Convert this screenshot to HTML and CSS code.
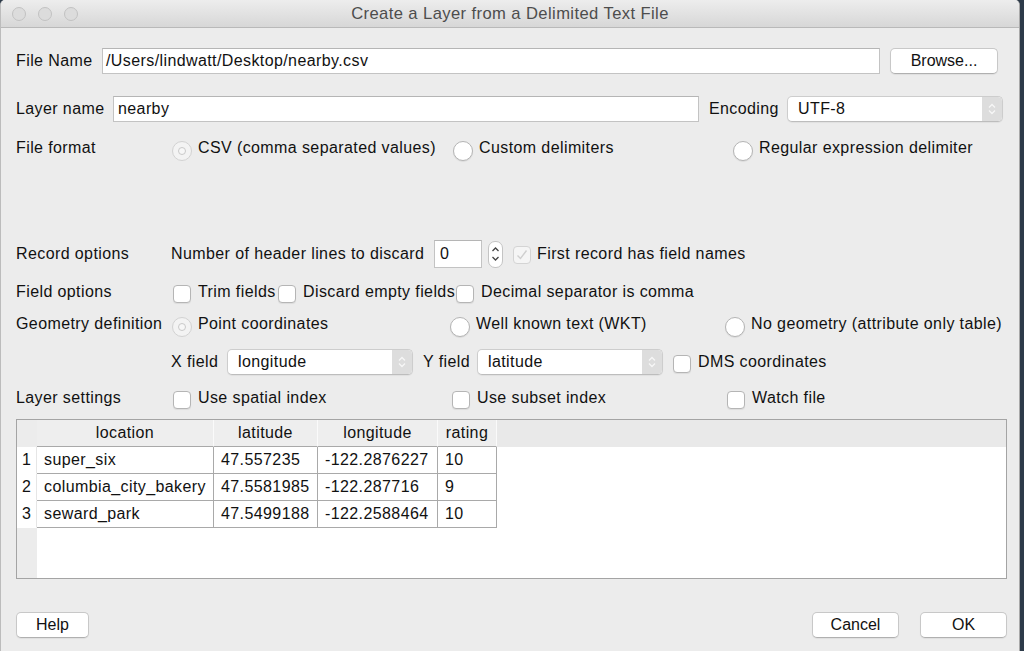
FILE: index.html
```html
<!DOCTYPE html>
<html>
<head>
<meta charset="utf-8">
<title>Create a Layer from a Delimited Text File</title>
<link rel="stylesheet" href="styles.css">
</head>
<body>
<div class="window">
  <div class="titlebar">
    <div class="lights"><span class="light"></span><span class="light"></span><span class="light"></span></div>
    <div class="title">Create a Layer from a Delimited Text File</div>
    <div></div>
  </div>
  <div class="content">
    <div class="row r-file">
      <span class="lbl w-file">File Name</span>
      <div class="input w-path">/Users/lindwatt/Desktop/nearby.csv</div>
      <button class="btn browse">Browse...</button>
    </div>

    <div class="row r-layer">
      <span class="lbl w-layer">Layer name</span>
      <div class="input w-lname">nearby</div>
      <span class="lbl w-enc-lbl">Encoding</span>
      <div class="combo w-enc">
        <span class="combo-text">UTF-8</span>
        <span class="combo-arrow"><svg width="10" height="16" viewBox="0 0 10 16"><path d="M2 6.5 L5 3.5 L8 6.5 M2 9.5 L5 12.5 L8 9.5"/></svg></span>
      </div>
    </div>

    <div class="row r-format">
      <span class="lbl w-sec">File format</span>
      <div class="opt fmt-1"><span class="radio disabled"></span><span>CSV (comma separated values)</span></div>
      <div class="opt fmt-2"><span class="radio"></span><span>Custom delimiters</span></div>
      <div class="opt"><span class="radio"></span><span>Regular expression delimiter</span></div>
    </div>

    <div class="row r-record">
      <span class="lbl w-sec2">Record options</span>
      <span class="lbl w-discard">Number of header lines to discard</span>
      <div class="input w-spin">0</div>
      <div class="spin"><svg width="15" height="28" viewBox="0 0 15 28"><path d="M4.5 11 L7.5 8 L10.5 11 M4.5 17 L7.5 20 L10.5 17"/></svg></div>
      <div class="opt first-rec"><span class="check disabled"><svg width="16" height="16" viewBox="0 0 16 16"><path d="M3.5 8.5 L6.5 11.5 L12.5 3.5"/></svg></span><span>First record has field names</span></div>
    </div>

    <div class="row r-field">
      <span class="lbl w-sec3">Field options</span>
      <div class="opt fo-trim"><span class="check"></span><span>Trim fields</span></div>
      <div class="opt fo-discard"><span class="check"></span><span>Discard empty fields</span></div>
      <div class="opt"><span class="check"></span><span>Decimal separator is comma</span></div>
    </div>

    <div class="row r-geom">
      <span class="lbl w-sec">Geometry definition</span>
      <div class="opt geo-1"><span class="radio disabled"></span><span>Point coordinates</span></div>
      <div class="opt geo-2"><span class="radio"></span><span>Well known text (WKT)</span></div>
      <div class="opt"><span class="radio"></span><span>No geometry (attribute only table)</span></div>
    </div>

    <div class="row r-xy">
      <span class="w-sec2"></span>
      <span class="lbl w-x">X field</span>
      <div class="combo w-xy">
        <span class="combo-text">longitude</span>
        <span class="combo-arrow"><svg width="10" height="16" viewBox="0 0 10 16"><path d="M2 6.5 L5 3.5 L8 6.5 M2 9.5 L5 12.5 L8 9.5"/></svg></span>
      </div>
      <span class="lbl w-y">Y field</span>
      <div class="combo w-xy">
        <span class="combo-text">latitude</span>
        <span class="combo-arrow"><svg width="10" height="16" viewBox="0 0 10 16"><path d="M2 6.5 L5 3.5 L8 6.5 M2 9.5 L5 12.5 L8 9.5"/></svg></span>
      </div>
      <div class="opt dms"><span class="check"></span><span>DMS coordinates</span></div>
    </div>

    <div class="row r-settings">
      <span class="lbl w-sec3">Layer settings</span>
      <div class="opt set-1"><span class="check"></span><span>Use spatial index</span></div>
      <div class="opt set-2"><span class="check"></span><span>Use subset index</span></div>
      <div class="opt"><span class="check"></span><span>Watch file</span></div>
    </div>

    <div class="grid-wrap">
      <table class="grid">
        <colgroup><col class="c-num"><col class="c-loc"><col class="c-lat"><col class="c-lon"><col class="c-rat"></colgroup>
        <thead>
          <tr><th class="corner"></th><th>location</th><th>latitude</th><th>longitude</th><th>rating</th></tr>
        </thead>
        <tbody>
          <tr><td class="num">1</td><td>super_six</td><td>47.557235</td><td>-122.2876227</td><td>10</td></tr>
          <tr><td class="num">2</td><td>columbia_city_bakery</td><td>47.5581985</td><td>-122.287716</td><td>9</td></tr>
          <tr><td class="num">3</td><td>seward_park</td><td>47.5499188</td><td>-122.2588464</td><td>10</td></tr>
        </tbody>
      </table>
    </div>

    <div class="row r-buttons">
      <button class="btn help">Help</button>
      <button class="btn cancel">Cancel</button>
      <button class="btn ok">OK</button>
    </div>
  </div>
</div>
</body>
</html>
```

FILE: styles.css
```css
* { box-sizing: border-box; }
html, body { margin: 0; padding: 0; }
body {
  width: 1024px;
  height: 651px;
  overflow: hidden;
  background: #2d3a49;
  font-family: "Liberation Sans", Arial, sans-serif;
  font-size: 16px;
  letter-spacing: 0.4px;
  color: #111111;
}
.window {
  width: 1020px;
  height: 651px;
  background: #ececec;
  border-left: 1px solid #bcbcbc;
  border-right: 1px solid #a9a9a9;
  border-radius: 5px 5px 0 0;
  overflow: hidden;
}
.titlebar {
  height: 28px;
  display: grid;
  grid-template-columns: 1fr auto 1fr;
  align-items: center;
  background: linear-gradient(#ededed, #d7d7d7);
  border-bottom: 1px solid #b9b9b9;
}
.lights { display: flex; gap: 12px; padding-left: 11px; }
.light {
  width: 14px; height: 14px; border-radius: 50%;
  background: #dcdcdc; border: 1px solid #c2c2c2;
}
.title { font-size: 16.6px; color: #4d4d4d; }

.content { padding-left: 15px; display: flex; flex-direction: column; }
.row { display: flex; align-items: center; }
.lbl { white-space: nowrap; }

.r-file { margin-top: 20px; height: 26px; }
.r-layer { margin-top: 22px; height: 26px; }
.r-format { margin-top: 14px; height: 24px; }
.r-record { margin-top: 80px; height: 28px; }
.r-field { margin-top: 14px; height: 20px; }
.r-geom { margin-top: 12px; height: 20px; }
.r-xy { margin-top: 15px; height: 26px; }
.r-settings { margin-top: 13px; height: 20px; }
.r-buttons { margin-top: 33px; height: 26px; width: 991px; }

.w-file { width: 86px; }
.w-layer { width: 97px; }
.w-enc-lbl { width: 78px; margin-left: 10px; }
.w-sec { width: 156px; }
.w-sec2 { width: 155px; }
.w-sec3 { width: 157px; }
.w-discard { width: 263px; }
.w-x { width: 56px; }
.w-y { width: 54px; margin-left: 10px; }

.input {
  height: 26px;
  background: #fff;
  border: 1px solid #c3c3c3;
  border-top-color: #b5b5b5;
  display: flex; align-items: center;
  padding-left: 3px;
  white-space: nowrap;
}
.w-path { width: 778px; }
.w-lname { width: 586px; padding-left: 4px; }
.w-spin { width: 48px; height: 28px; padding-left: 5px; }

.btn {
  height: 26px;
  padding: 0;
  font: inherit;
  color: #111;
  background: #fff;
  border: 1px solid #c8c8c8;
  border-bottom-color: #b0b0b0;
  border-radius: 5px;
  box-shadow: 0 1px 1px rgba(0,0,0,0.06);
}
.browse { width: 108px; margin-left: 10px; }
.help { width: 73px; }
.cancel { width: 87px; margin-left: auto; }
.ok { width: 87px; margin-left: 21px; }

.combo {
  height: 26px;
  display: flex;
  background: #fff;
  border: 1px solid #cdcdcd;
  border-bottom-color: #bdbdbd;
  border-radius: 5px;
  overflow: hidden;
  box-shadow: 0 1px 1px rgba(0,0,0,0.05);
}
.combo-text { flex: 1; display: flex; align-items: center; padding-left: 10px; }
.combo-arrow {
  width: 20px;
  background: #dddddd;
  display: flex; align-items: center; justify-content: center;
}
.combo-arrow path { fill: none; stroke: #f6f6f6; stroke-width: 1.4; }
.w-enc { width: 216px; }
.w-xy { width: 186px; }

.spin {
  width: 15px; height: 27px; margin-left: 6px;
  background: #fff;
  border: 1px solid #c4c4c4;
  border-radius: 7px;
  display: flex; align-items: center; justify-content: center;
  overflow: hidden;
}
.spin svg { flex: none; }
.spin path { fill: none; stroke: #444; stroke-width: 1.3; }

.opt { display: flex; align-items: center; white-space: nowrap; }
.fmt-1 { width: 281px; }
.fmt-2 { width: 280px; }
.geo-1 { width: 278px; }
.geo-2 { width: 275px; }
.set-1 { width: 279px; }
.set-2 { width: 275px; }
.fo-trim { width: 105px; }
.fo-discard { width: 178px; }
.first-rec { margin-left: 10px; }
.dms { margin-left: 10px; }

.radio {
  flex: none;
  width: 20px; height: 20px;
  margin-right: 6px;
  margin-top: 6px;
  border-radius: 50%;
  background: #fff;
  border: 1px solid #b4b4b4;
  box-shadow: 0 1px 1px rgba(0,0,0,0.08);
  display: flex; align-items: center; justify-content: center;
}
.radio.disabled { background: #f3f3f3; border-color: #d2d2d2; box-shadow: none; }
.radio.disabled::after {
  content: "";
  width: 6px; height: 6px; border-radius: 50%;
  border: 1px solid #c9c9c9;
  background: #f7f7f7;
}

.check {
  flex: none;
  width: 18px; height: 18px;
  margin-right: 7px;
  margin-top: 4px;
  background: #fff;
  border: 1px solid #b5b5b5;
  border-radius: 4px;
  box-shadow: 0 1px 1px rgba(0,0,0,0.07);
  display: flex; align-items: center; justify-content: center;
}
.check.disabled { background: #f5f5f5; border-color: #d4d4d4; box-shadow: none; margin-right: 6px; margin-top: 2px; }
.check path { fill: none; stroke: #cfcfcf; stroke-width: 1.4; }

.grid-wrap {
  margin-top: 11px;
  width: 991px;
  height: 160px;
  border: 1px solid #a4a4a4;
  background:
    linear-gradient(#e9e9e9, #e9e9e9) 0 0 / 100% 27px no-repeat,
    linear-gradient(#ececec, #ececec) 0 0 / 20px 100% no-repeat,
    #ffffff;
}
.grid { border-collapse: separate; border-spacing: 0; table-layout: fixed; width: 480px; }
.c-num { width: 20px; }
.c-loc { width: 177px; }
.c-lat { width: 104px; }
.c-lon { width: 120px; }
.c-rat { width: 59px; }
.grid th {
  height: 27px;
  padding: 0;
  font-weight: normal;
  text-align: center;
  background: #eeeeee;
  border-right: 1px solid #fafafa;
  border-bottom: 1px solid #a9a9a9;
}
.grid th.corner { background: #ececec; border-right: none; border-bottom: none; }
.grid td {
  height: 27px;
  padding: 0 0 0 7px;
  white-space: nowrap;
  background: #fff;
  border-right: 1px solid #a9a9a9;
  border-bottom: 1px solid #a9a9a9;
}
.grid td.num {
  padding-left: 5px;
  border-right: 1px solid #e6e6e6;
  border-bottom: 1px solid #ffffff;
}
```
